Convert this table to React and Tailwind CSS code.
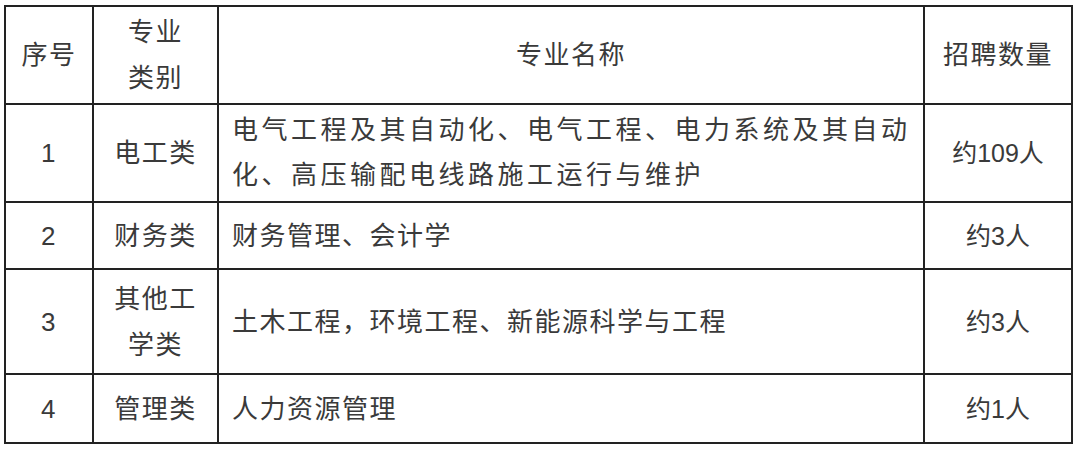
import React from "react";

const rows = [
  {
    no: "1",
    type: ["电工类"],
    names: ["电气工程及其自动化、电气工程、电力系统及其自动", "化、高压输配电线路施工运行与维护"],
    wide: true,
    count: "约109人",
    h: "h-[98px]",
  },
  { no: "2", type: ["财务类"], names: ["财务管理、会计学"], count: "约3人", h: "h-[67px]" },
  {
    no: "3",
    type: ["其他工", "学类"],
    names: ["土木工程，环境工程、新能源科学与工程"],
    count: "约3人",
    h: "h-[105px]",
  },
  { no: "4", type: ["管理类"], names: ["人力资源管理"], count: "约1人", h: "h-[69px]" },
];

const cell = "flex items-center justify-center text-center border-r-2 border-b-2 border-[#222]";

const Lines = ({ items }) => (
  <div>
    {items.map((t, i) => (
      <div key={i}>{t}</div>
    ))}
  </div>
);

export default function App() {
  return (
    <div className="w-[1080px] h-[453px] bg-white overflow-hidden">
      <div
        className="ml-[4px] mt-[5px] w-[1069px] border-l-2 border-t-2 border-[#222] text-[26px] leading-[46px] tracking-[1.5px] text-[#3a3a3a] grid grid-cols-[88px_125px_706px_148px]"
        style={{ fontFamily: '"Liberation Sans", "Noto Sans CJK SC", sans-serif' }}
      >
        {/* 表头 */}
        <div className={`${cell} h-[98px]`}>序号</div>
        <div className={`${cell} h-[98px]`}>
          <Lines items={["专业", "类别"]} />
        </div>
        <div className={`${cell} h-[98px]`}>专业名称</div>
        <div className={`${cell} h-[98px]`}>招聘数量</div>

        {rows.map((r) => (
          <React.Fragment key={r.no}>
            <div className={`${cell} ${r.h}`}>{r.no}</div>
            <div className={`${cell} ${r.h}`}>
              <Lines items={r.type} />
            </div>
            <div
              className={`flex items-center border-r-2 border-b-2 border-[#222] pl-[13px] pr-[8px] ${r.h} ${
                r.wide ? "tracking-[3.5px] leading-[45px]" : ""
              }`}
            >
              <Lines items={r.names} />
            </div>
            <div className={`${cell} ${r.h} text-[25px] tracking-normal`}>{r.count}</div>
          </React.Fragment>
        ))}
      </div>
    </div>
  );
}
